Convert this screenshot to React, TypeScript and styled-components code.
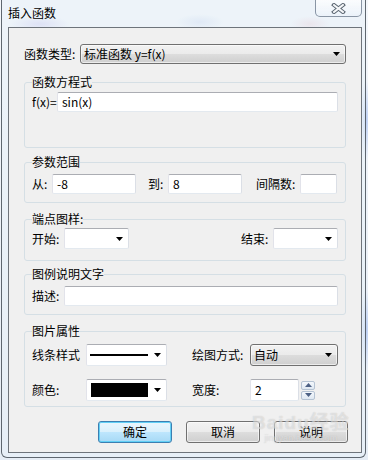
import React, { FC, ReactNode } from "react";
import styled, { createGlobalStyle } from "styled-components";

const GlobalStyle = createGlobalStyle`
  html, body {
    margin: 0;
    padding: 0;
  }
  body {
    font-family: "Noto Sans CJK SC", "Liberation Sans", sans-serif;
    font-size: 12px;
    color: #000;
  }
`;

const Screen = styled.div`
  position: relative;
  width: 368px;
  height: 460px;
  overflow: hidden;
  background:
    radial-gradient(ellipse 30px 8px at 40px 24px, rgba(170, 160, 230, 0.45), transparent),
    radial-gradient(ellipse 24px 8px at 200px 22px, rgba(170, 190, 230, 0.4), transparent),
    radial-gradient(ellipse 20px 8px at 310px 24px, rgba(230, 170, 180, 0.4), transparent),
    radial-gradient(ellipse 6px 40px at 366px 120px, rgba(150, 180, 240, 0.6), transparent),
    radial-gradient(ellipse 6px 40px at 366px 330px, rgba(150, 180, 240, 0.6), transparent),
    linear-gradient(#f4f7fb, #e6edf5);
`;

const Window = styled.div`
  box-sizing: border-box;
  width: 365px;
  height: 458px;
  margin-left: 1px;
  padding: 0 3px 4px 6px;
  border: 1px solid rgba(70, 78, 88, 0.85);
  border-top: none;
  border-radius: 0 0 6px 6px;
  background: rgba(232, 240, 248, 0.55);
`;

const TitleBar = styled.div`
  display: flex;
  justify-content: space-between;
  align-items: flex-start;
  height: 27px;
`;

const Title = styled.div`
  padding-top: 5px;
  line-height: 16px;
  font-size: 12px;
`;

const CloseButton = styled.div`
  box-sizing: border-box;
  width: 47px;
  height: 18px;
  margin-top: -1px;
  display: flex;
  align-items: center;
  justify-content: center;
  border: 1px solid rgba(100, 115, 135, 0.75);
  border-radius: 0 0 5px 5px;
  background: linear-gradient(rgba(255, 255, 255, 0.75), rgba(235, 242, 250, 0.6));
`;

const Client = styled.div`
  box-sizing: border-box;
  height: 426px;
  padding: 16px 15px 0 15px;
  border: 1px solid #6e747b;
  background: #f0f0f0;
`;

const Row = styled.div`
  display: flex;
  align-items: center;
`;

const Label = styled.span<{ $w?: number; $ml?: number }>`
  display: inline-block;
  width: ${(p) => (p.$w ? `${p.$w}px` : "auto")};
  margin-left: ${(p) => p.$ml ?? 0}px;
  line-height: 16px;
  white-space: nowrap;
`;

const Group = styled.fieldset<{ $mt: number; $pt: number; $pb: number }>`
  margin: ${(p) => p.$mt}px 0 0 0;
  padding: ${(p) => p.$pt}px 7px ${(p) => p.$pb}px 7px;
  border: 1px solid #d5dfe5;
  border-radius: 3px;
  min-width: 0;
`;

const Legend = styled.legend`
  padding: 0;
  line-height: 16px;
  font-size: 12px;
`;

const TextBox = styled.div<{ $w?: number }>`
  box-sizing: border-box;
  height: 20px;
  width: ${(p) => (p.$w ? `${p.$w}px` : "auto")};
  flex: ${(p) => (p.$w ? "none" : "1")};
  padding: 0 4px;
  display: flex;
  align-items: center;
  border: 1px solid;
  border-color: #abadb3 #dbdfe6 #e3e9ef #e2e3ea;
  border-radius: 2px;
  background: #fff;
  font-size: 12px;
  line-height: 16px;
`;

const DropBox = styled.div<{ $w: number; $h?: number }>`
  box-sizing: border-box;
  width: ${(p) => p.$w}px;
  height: ${(p) => p.$h ?? 21}px;
  padding: 0 5px 0 3px;
  display: flex;
  align-items: center;
  justify-content: space-between;
  border: 1px solid;
  border-color: #abadb3 #dbdfe6 #e3e9ef #e2e3ea;
  border-radius: 2px;
  background: #fff;
`;

const ComboBox = styled.div<{ $w?: number }>`
  box-sizing: border-box;
  height: ${(p) => (p.$w ? 22 : 20)}px;
  width: ${(p) => (p.$w ? `${p.$w}px` : "auto")};
  flex: ${(p) => (p.$w ? "none" : "1")};
  padding: 0 5px 0 3px;
  display: flex;
  align-items: center;
  justify-content: space-between;
  border: 1px solid #707070;
  border-radius: 3px;
  background: linear-gradient(#f2f2f2 0%, #ebebeb 50%, #dddddd 50%, #cfcfcf 100%);
  box-shadow: inset 0 0 0 1px rgba(255, 255, 255, 0.6);
  line-height: 16px;
`;

const LineSample = styled.div`
  width: 58px;
  height: 2px;
  background: #000;
`;

const ColorSample = styled.div<{ $color: string }>`
  width: 57px;
  height: 14px;
  margin-left: 1px;
  background: ${(p) => p.$color};
`;

const PropsGrid = styled.div`
  display: grid;
  grid-template-columns: 54px 81px 25px 58px 1fr;
  grid-auto-rows: 22px;
  row-gap: 13px;
  align-items: center;
`;

const SpinWrap = styled.div`
  display: flex;
  align-items: center;
  gap: 2px;
`;

const Spin = styled.div`
  display: flex;
  flex-direction: column;
  gap: 1px;
`;

const SpinPart = styled.div`
  box-sizing: border-box;
  width: 14px;
  height: 9px;
  display: flex;
  align-items: center;
  justify-content: center;
  border: 1px solid #b5c3d3;
  border-radius: 2px;
  background: linear-gradient(#f4f8fc, #dfe8f2);
`;

const ButtonRow = styled.div`
  display: flex;
  justify-content: flex-end;
  gap: 14px;
  margin: 14px -2px 0 0;
`;

const Button = styled.div<{ $primary?: boolean }>`
  box-sizing: border-box;
  width: 74px;
  height: 22px;
  display: flex;
  align-items: center;
  justify-content: center;
  border: 1px solid ${(p) => (p.$primary ? "#3c7fb1" : "#707070")};
  border-radius: 3px;
  background: ${(p) =>
    p.$primary
      ? "linear-gradient(#eaf6fd 0%, #d9f0fc 50%, #bee6fd 50%, #a7d9f5 100%)"
      : "linear-gradient(#f2f2f2 0%, #ebebeb 50%, #dddddd 50%, #cfcfcf 100%)"};
  box-shadow: ${(p) =>
    p.$primary
      ? "inset 0 0 0 1px #62d0f6"
      : "inset 0 0 0 1px rgba(255, 255, 255, 0.6)"};
  line-height: 16px;
`;

// faint baidu watermark sitting over the bottom-right corner
const Watermark = styled.div`
  position: absolute;
  left: 252px;
  top: 413px;
  display: flex;
  flex-direction: column;
  align-items: center;
  color: rgba(255, 255, 255, 0.45);
  text-shadow: 0 0 1px rgba(130, 130, 130, 0.4);
  pointer-events: none;
`;

const MarkTitle = styled.div`
  font-family: "Liberation Sans", "Noto Sans CJK SC", sans-serif;
  font-weight: bold;
  font-size: 19px;
  line-height: 20px;
  letter-spacing: 1px;
`;

const MarkUrl = styled.div`
  font-family: "Liberation Sans", sans-serif;
  font-size: 9px;
  line-height: 10px;
`;

const Arrow: FC = () => (
  <svg width="7" height="4" viewBox="0 0 7 4">
    <polygon points="0,0 7,0 3.5,4" fill="#000" />
  </svg>
);

const SpinArrow: FC<{ up?: boolean }> = ({ up }) => (
  <svg width="7" height="4" viewBox="0 0 7 4">
    <polygon points={up ? "0,4 7,4 3.5,0" : "0,0 7,0 3.5,4"} fill="#4d6185" />
  </svg>
);

const CloseIcon: FC = () => (
  <svg width="15" height="11" viewBox="0 0 15 11">
    <g strokeLinecap="square">
      <line x1="3" y1="2" x2="12" y2="9" stroke="#55606c" strokeWidth="4" />
      <line x1="12" y1="2" x2="3" y2="9" stroke="#55606c" strokeWidth="4" />
      <line x1="3" y1="2" x2="12" y2="9" stroke="#f4f6f8" strokeWidth="2" />
      <line x1="12" y1="2" x2="3" y2="9" stroke="#f4f6f8" strokeWidth="2" />
    </g>
  </svg>
);

const Box: FC<{ title: string; mt: number; pt: number; pb: number; children: ReactNode }> = ({
  title,
  mt,
  pt,
  pb,
  children,
}) => (
  <Group $mt={mt} $pt={pt} $pb={pb}>
    <Legend>{title}</Legend>
    {children}
  </Group>
);

const App: FC = () => {
  return (
    <Screen>
      <GlobalStyle />
      <Window>
        <TitleBar>
          <Title>插入函数</Title>
          <CloseButton>
            <CloseIcon />
          </CloseButton>
        </TitleBar>
        <Client>
          <Row>
            <Label $w={56}>函数类型:</Label>
            <ComboBox>
              <span>标准函数 y=f(x)</span>
              <Arrow />
            </ComboBox>
          </Row>

          <Box title="函数方程式" mt={10} pt={2} pb={35}>
            <Row>
              <Label $w={25}>f(x)=</Label>
              <TextBox>sin(x)</TextBox>
            </Row>
          </Box>

          <Box title="参数范围" mt={6} pt={4} pb={8}>
            <Row>
              <Label $w={20}>从:</Label>
              <TextBox $w={84}>-8</TextBox>
              <Label $w={20} $ml={12}>到:</Label>
              <TextBox $w={74}>8</TextBox>
              <Label $w={44} $ml={14}>间隔数:</Label>
              <TextBox $w={37} />
            </Row>
          </Box>

          <Box title="端点图样:" mt={8} pt={1} pb={11}>
            <Row>
              <Label $w={32}>开始:</Label>
              <DropBox $w={65}>
                <span />
                <Arrow />
              </DropBox>
              <Label $w={32} style={{ marginLeft: "auto" }}>结束:</Label>
              <DropBox $w={65}>
                <span />
                <Arrow />
              </DropBox>
            </Row>
          </Box>

          <Box title="图例说明文字" mt={5} pt={4} pb={8}>
            <Row>
              <Label $w={32}>描述:</Label>
              <TextBox />
            </Row>
          </Box>

          <Box title="图片属性" mt={8} pt={5} pb={5}>
            <PropsGrid>
              <Label>线条样式</Label>
              <DropBox $w={81} $h={22}>
                <LineSample />
                <Arrow />
              </DropBox>
              <span />
              <Label>绘图方式:</Label>
              <ComboBox $w={88}>
                <span>自动</span>
                <Arrow />
              </ComboBox>

              <Label>颜色:</Label>
              <DropBox $w={81} $h={22}>
                <ColorSample $color="#000" />
                <Arrow />
              </DropBox>
              <span />
              <Label>宽度:</Label>
              <SpinWrap>
                <TextBox $w={49} style={{ height: 22 }}>2</TextBox>
                <Spin>
                  <SpinPart>
                    <SpinArrow up />
                  </SpinPart>
                  <SpinPart>
                    <SpinArrow />
                  </SpinPart>
                </Spin>
              </SpinWrap>
            </PropsGrid>
          </Box>

          <ButtonRow>
            <Button $primary>确定</Button>
            <Button>取消</Button>
            <Button>说明</Button>
          </ButtonRow>
        </Client>
      </Window>
      <Watermark>
        <MarkTitle>Baidu经验</MarkTitle>
        <MarkUrl>jingyan.baidu.com</MarkUrl>
      </Watermark>
    </Screen>
  );
};

export default App;
